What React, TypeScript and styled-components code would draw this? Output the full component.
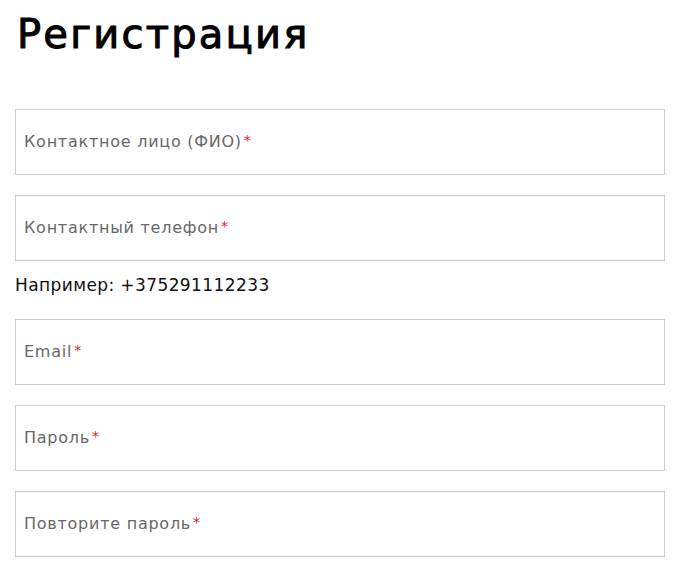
import styled, { createGlobalStyle } from "styled-components";

const GlobalStyle = createGlobalStyle`
  body {
    margin: 0;
    background: #fff;
    font-family: "DejaVu Sans", "Noto Sans", sans-serif;
  }
`;

const Page = styled.div`
  padding: 8px 16px 0 15px;
  width: 650px;
`;

const Title = styled.h1`
  margin: 0 0 49px 2px;
  font-size: 40px;
  font-weight: 400;
  line-height: 52px;
  color: #000;
  letter-spacing: 2.2px;
  -webkit-text-stroke: 1px #000;
`;

const Form = styled.form`
  display: flex;
  flex-direction: column;
  gap: 20px;
`;

const Field = styled.label`
  display: flex;
  flex-direction: column;
`;

const Box = styled.div`
  box-sizing: border-box;
  height: 66px;
  border: 1px solid #cccccc;
  display: flex;
  align-items: center;
  padding: 0 8px 2px;
`;

const Placeholder = styled.span`
  font-size: 16px;
  color: #686868;
  letter-spacing: 0.75px;
`;

const Star = styled.span`
  color: #e32020;
  font-size: 14px;
  margin-left: 2px;
  vertical-align: 2px;
`;

const Hint = styled.div`
  font-size: 17px;
  line-height: 22px;
  color: #111;
  margin: 13px 0 3px;
  letter-spacing: 0.4px;
`;

type FieldProps = {
  label: string;
  hint?: string;
};

function InputField(props: FieldProps) {
  const { label, hint } = props;
  return (
    <Field>
      <Box>
        <Placeholder>
          {label}
          <Star>*</Star>
        </Placeholder>
      </Box>
      {hint && <Hint>{hint}</Hint>}
    </Field>
  );
}

export default function App() {
  return (
    <>
      <GlobalStyle />
      <Page>
        <Title>Регистрация</Title>
        <Form>
          <InputField label="Контактное лицо (ФИО)" />
          <InputField label="Контактный телефон" hint="Например: +375291112233" />
          <InputField label="Email" />
          <InputField label="Пароль" />
          <InputField label="Повторите пароль" />
        </Form>
      </Page>
    </>
  );
}
